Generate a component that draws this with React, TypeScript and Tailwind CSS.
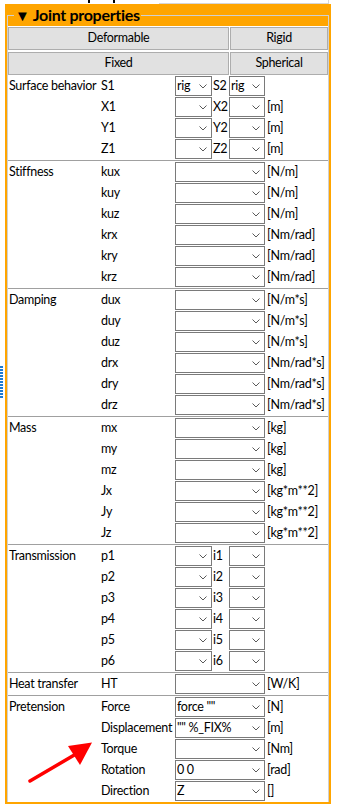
import type { ReactNode } from 'react';

type Row = {
  label: string;
  value?: string;
  label2?: string;
  value2?: string;
  pair?: boolean;
  unit?: string;
};

type Group = { title: string; rows: Row[]; first?: boolean };

const groups: Group[] = [
  {
    title: 'Surface behavior',
    first: true,
    rows: [
      { label: 'S1', value: 'rig', label2: 'S2', value2: 'rig', pair: true },
      { label: 'X1', label2: 'X2', pair: true, unit: '[m]' },
      { label: 'Y1', label2: 'Y2', pair: true, unit: '[m]' },
      { label: 'Z1', label2: 'Z2', pair: true, unit: '[m]' },
    ],
  },
  {
    title: 'Stiffness',
    rows: [
      { label: 'kux', unit: '[N/m]' },
      { label: 'kuy', unit: '[N/m]' },
      { label: 'kuz', unit: '[N/m]' },
      { label: 'krx', unit: '[Nm/rad]' },
      { label: 'kry', unit: '[Nm/rad]' },
      { label: 'krz', unit: '[Nm/rad]' },
    ],
  },
  {
    title: 'Damping',
    rows: [
      { label: 'dux', unit: '[N/m*s]' },
      { label: 'duy', unit: '[N/m*s]' },
      { label: 'duz', unit: '[N/m*s]' },
      { label: 'drx', unit: '[Nm/rad*s]' },
      { label: 'dry', unit: '[Nm/rad*s]' },
      { label: 'drz', unit: '[Nm/rad*s]' },
    ],
  },
  {
    title: 'Mass',
    rows: [
      { label: 'mx', unit: '[kg]' },
      { label: 'my', unit: '[kg]' },
      { label: 'mz', unit: '[kg]' },
      { label: 'Jx', unit: '[kg*m**2]' },
      { label: 'Jy', unit: '[kg*m**2]' },
      { label: 'Jz', unit: '[kg*m**2]' },
    ],
  },
  {
    title: 'Transmission',
    rows: [1, 2, 3, 4, 5, 6].map((n) => ({ label: `p${n}`, label2: `i${n}`, pair: true })),
  },
  { title: 'Heat transfer', rows: [{ label: 'HT', unit: '[W/K]' }] },
  {
    title: 'Pretension',
    rows: [
      { label: 'Force', value: 'force ""', unit: '[N]' },
      { label: 'Displacement', value: '"" %_FIX%', unit: '[m]' },
      { label: 'Torque', unit: '[Nm]' },
      { label: 'Rotation', value: '0 0', unit: '[rad]' },
      { label: 'Direction', value: 'Z', unit: '[]' },
    ],
  },
];

function Chevron() {
  return (
    <svg width="8" height="5" viewBox="0 0 8 5" className="shrink-0">
      <path d="M0.5 0.5 L4 4 L7.5 0.5" fill="none" stroke="#5a5a5a" strokeWidth="1" />
    </svg>
  );
}

function Combo({ value = '', className = '' }: { value?: string; className?: string }) {
  return (
    <div className={`h-[20px] border border-[#7a7a7a] bg-white flex items-center pl-[1px] pr-[4px] ${className}`}>
      <span className="flex-1 whitespace-nowrap overflow-hidden leading-[18px]">{value}</span>
      <Chevron />
    </div>
  );
}

function Button({ children }: { children: ReactNode }) {
  return (
    <div className="h-[23px] bg-[#e1e1e1] border border-[#adadad] flex items-center justify-center leading-none">
      {children}
    </div>
  );
}

function Section({ group }: { group: Group }) {
  return (
    <div className={group.first ? 'pt-[1px]' : 'border-t border-[#a0a0a0] pt-[1px]'}>
      {group.rows.map((r, i) => (
        <div key={r.label} className="grid grid-cols-[93px_74px_37px_17px_36px_1fr] h-[21px] leading-[20px]">
          <div className="pl-[1px] whitespace-nowrap">{i === 0 ? group.title : ''}</div>
          <div className="whitespace-nowrap">{r.label}</div>
          {r.pair ? (
            <>
              <Combo value={r.value} />
              <div className="pl-[1px]">{r.label2}</div>
              <Combo value={r.value2} />
            </>
          ) : (
            <Combo value={r.value} className="col-span-3" />
          )}
          <div className="pl-[2px] whitespace-nowrap">{r.unit}</div>
        </div>
      ))}
    </div>
  );
}

export default function App() {
  return (
    <div className="relative w-[343px] h-[811px] bg-white overflow-hidden text-[12.5px] tracking-[-0.3px] text-black font-['Lato',sans-serif]">
      {/* remnant of the panel above */}
      <div className="flex h-[4px]">
        <div className="ml-[88px] w-[2px] h-[3px] bg-black" />
        <div className="ml-[23px] w-[2px] h-[3px] bg-black" />
        <div className="ml-[44px] w-[170px] h-[4px] border-b border-r border-[#d6d6d6]" />
      </div>

      <div className="flex">
        <div className="w-[5px] pt-[362px]">
          <div className="flex flex-col gap-px w-[3px]">
            {Array.from({ length: 11 }).map((_, i) => (
              <div key={i} className="h-[2px] w-[3px] bg-[#1f7ad0]" />
            ))}
          </div>
        </div>

        <div className="w-[326px] border-2 border-t-0 border-[#ffa500]">
          <div className="flex h-[22px] bg-[#ffa500]">
            <div className="w-[7px] h-[11px] self-end border-t border-l border-[#d0d0d0]" />
            <div className="px-[1px] text-[16px] font-bold leading-[22px] tracking-[-0.3px] whitespace-nowrap">
              <span className="text-[15px]">▼</span> Joint properties
            </div>
            <div className="flex-1 h-[11px] self-end border-t border-r border-[#d0d0d0]" />
          </div>

          <div className="border-x border-[#d0d0d0] pt-[1px]">
            <div className="grid grid-cols-[221px_1fr] gap-x-[1px] gap-y-[2px]">
              <Button>Deformable</Button>
              <Button>Rigid</Button>
              <Button>Fixed</Button>
              <Button>Spherical</Button>
            </div>
            {groups.map((g) => (
              <Section key={g.title} group={g} />
            ))}
          </div>
        </div>
      </div>

      <svg className="absolute left-0 top-0 pointer-events-none" width="343" height="811">
        <line x1="30" y1="781" x2="76" y2="754" stroke="#ff0000" strokeWidth="3.5" strokeLinecap="round" />
        <polygon points="68,746 92,742.5 80,765" fill="#ff0000" />
      </svg>
    </div>
  );
}
